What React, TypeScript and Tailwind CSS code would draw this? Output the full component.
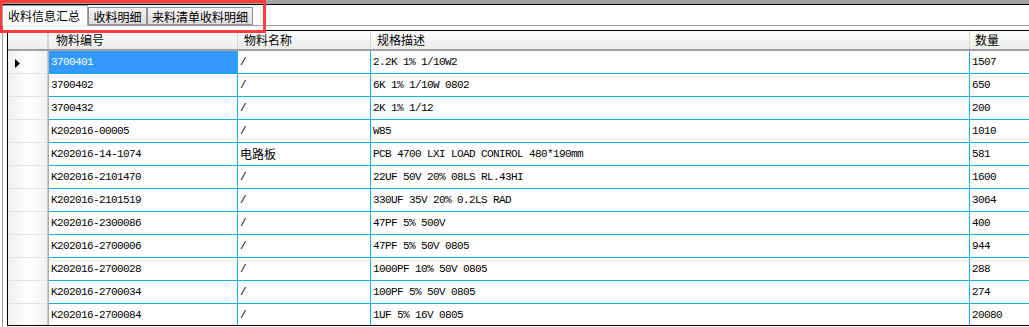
import React from 'react';

type Row = { code: string; name: string; spec: string; qty: string };

const ROWS: Row[] = [
  { code: '3700401', name: '/', spec: '2.2K 1% 1/10W2', qty: '1507' },
  { code: '3700402', name: '/', spec: '6K 1% 1/10W 0802', qty: '650' },
  { code: '3700432', name: '/', spec: '2K 1% 1/12', qty: '200' },
  { code: 'K202016-00005', name: '/', spec: 'W85', qty: '1010' },
  { code: 'K202016-14-1074', name: '电路板', spec: 'PCB 4700 LXI LOAD CONIROL 480*190mm', qty: '581' },
  { code: 'K202016-2101470', name: '/', spec: '22UF 50V 20% 08LS RL.43HI', qty: '1600' },
  { code: 'K202016-2101519', name: '/', spec: '330UF 35V 20% 0.2LS RAD', qty: '3064' },
  { code: 'K202016-2300086', name: '/', spec: '47PF 5% 500V', qty: '400' },
  { code: 'K202016-2700006', name: '/', spec: '47PF 5% 50V 0805', qty: '944' },
  { code: 'K202016-2700028', name: '/', spec: '1000PF 10% 50V 0805', qty: '288' },
  { code: 'K202016-2700034', name: '/', spec: '100PF 5% 50V 0805', qty: '274' },
  { code: 'K202016-2700084', name: '/', spec: '1UF 5% 16V 0805', qty: '20080' },
];

const cjk = "font-['Noto_Sans_CJK_SC','Noto_Sans',sans-serif] text-[12px] leading-none";
const mono = "font-['Liberation_Mono',monospace] text-[11px] tracking-[-0.6px] leading-none";

function Cell({ text, className }: { text: string; className: string }) {
  const hasCjk = /[\u4e00-\u9fff]/.test(text);
  return (
    <div className={`flex items-center pl-[2px] border-b border-[#14b0ee] whitespace-nowrap overflow-hidden ${className}`}>
      <span className={hasCjk ? cjk : mono}>{text}</span>
    </div>
  );
}

export default function App() {
  return (
    <div className="relative w-[1029px] h-[327px] overflow-hidden bg-white text-black">
      {/* window top edge */}
      <div className="h-[4px] bg-[#a3a3a3]" />
      <div className="h-px bg-black" />

      {/* tab strip */}
      <div className="flex items-end h-[21px] pl-[2px] border-b border-[#a0a0a0]">
        <div className={`relative z-10 -mb-px flex items-center h-[21px] w-[86px] pl-[5px] bg-white border-x border-t border-[#a0a0a0] ${cjk}`}>
          收料信息汇总
        </div>
        <div className={`flex items-center justify-center pt-[2px] h-[18px] w-[59px] border border-[#8e8e8e] bg-gradient-to-b from-[#f4f4f4] to-[#dddddd] ${cjk}`}>
          收料明细
        </div>
        <div className={`flex items-center justify-center pt-[2px] h-[18px] w-[106px] border border-[#8e8e8e] bg-gradient-to-b from-[#f4f4f4] to-[#dddddd] ${cjk}`}>
          来料清单收料明细
        </div>
      </div>

      {/* tab page */}
      <div className="ml-[2px] pl-[4px] pt-[4px] h-[301px] border-l border-[#a0a0a0]">
        <div className="h-[296px] border-l border-t border-b border-black overflow-hidden">
          {/* column headers */}
          <div className="flex h-[20px] border-b-2 border-[#a0a0a0] bg-gradient-to-b from-white to-[#ebebeb]">
            <div className="w-[41px] shrink-0 border-r-2 border-[#d2d2d2]" />
            <div className={`w-[189px] shrink-0 flex items-center pl-[7px] border-r border-[#d5d5d5] ${cjk}`}>物料编号</div>
            <div className={`w-[133px] shrink-0 flex items-center pl-[6px] border-r border-[#d5d5d5] ${cjk}`}>物料名称</div>
            <div className={`w-[599px] shrink-0 flex items-center pl-[6px] border-r border-[#d5d5d5] ${cjk}`}>规格描述</div>
            <div className={`flex-1 flex items-center pl-[5px] ${cjk}`}>数量</div>
          </div>

          {ROWS.map((r, i) => (
            <div key={r.code} className="flex h-[23px]">
              <div className="w-[39px] shrink-0 flex items-center pl-[7px] border-b border-[#e4e4e4] bg-gradient-to-r from-[#efefef] via-white to-[#f2f2f2]">
                {i === 0 && (
                  <svg width="6" height="9" viewBox="0 0 6 9" className="mt-[2px]">
                    <path d="M0 0 L5 4.5 L0 9 Z" fill="#000" />
                  </svg>
                )}
              </div>
              <div className="w-[2px] shrink-0 bg-gradient-to-r from-[#d6d6d6] to-[#a0a0a0]" />
              <Cell
                text={r.code}
                className={`w-[189px] shrink-0 border-r ${i === 0 ? 'bg-[#3399ff] text-white' : ''}`}
              />
              <Cell text={r.name} className="w-[133px] shrink-0 border-r" />
              <Cell text={r.spec} className="w-[599px] shrink-0 border-r" />
              <Cell text={r.qty} className="flex-1" />
            </div>
          ))}
        </div>
      </div>

      {/* red annotation box */}
      <div className="absolute left-0 top-0 w-[266px] h-[33px] border-[3px] border-[#ff3b3b] pointer-events-none" />
    </div>
  );
}
